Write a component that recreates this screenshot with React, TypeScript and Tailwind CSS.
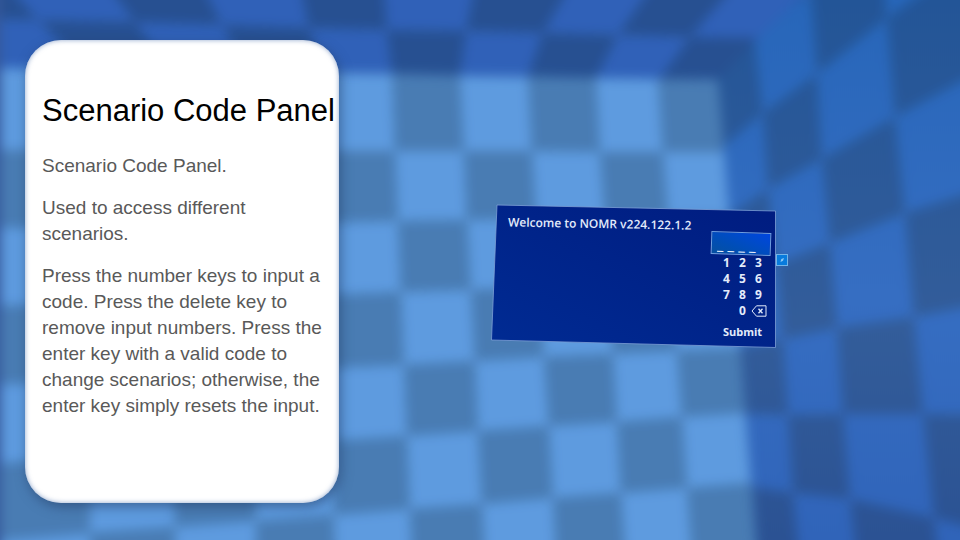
import React, { useState } from "react";

type Point = [number, number];

const backWall: { rows: number; topX: number[]; bottomX: number[]; leftY: number[]; rightY: number[] } = {
  rows: 8,
  topX: [-95, -5, 88, 170, 248, 322, 392, 460, 528, 596, 658, 718],
  bottomX: [-105, -10, 90, 175, 256, 335, 411, 484, 555, 624, 690, 755],
  leftY: [68, 150, 228, 306, 385, 463, 540, 618, 696],
  rightY: [80, 152, 216, 281, 348, 414, 485, 555, 625],
};

const ceiling: Point[][] = [
  [[-110, -40], [-15, -40], [90, -40], [190, -40], [295, -40], [382, -40], [480, -40], [585, -40], [670, -40], [757, -40], [840, -40]],
  [[-75, 18], [38, 20], [135, 22], [222, 25], [309, 28], [387, 30], [466, 31], [543, 33], [618, 35], [690, 37], [758, 38]],
  [[-5, 68], [88, 69], [170, 70], [248, 71], [322, 72], [392, 73], [460, 75], [528, 76], [596, 78], [660, 79], [718, 79]],
];

const sideWall: Point[][] = [
  [[710, 10], [716, 79], [723, 147], [729, 216], [735, 281], [740, 348], [746, 414], [752, 487], [758, 560]],
  [[750, -40], [754, 36], [763, 113], [768, 189], [777, 264], [783, 339], [788, 415], [793, 493], [801, 575]],
  [[808, -92], [811, -8], [817, 74], [822, 159], [830, 243], [837, 328], [843, 414], [850, 499], [860, 590]],
  [[872, -185], [878, -85], [887, 18], [895, 117], [905, 213], [914, 317], [923, 414], [934, 518], [945, 620]],
  [[970, -290], [975, -175], [985, -52], [990, 66], [996, 185], [1003, 300], [1010, 415], [1020, 540], [1030, 660]],
];

const toPoints = (pts: Point[]) => pts.map((p) => p.join(",")).join(" ");

function meet(topX: number, bottomX: number, leftY: number, rightY: number): Point {
  const roughY = leftY + ((rightY - leftY) * topX) / 730;
  const x = topX + ((bottomX - topX) * (roughY - 78)) / 460;
  return [Math.round(x), Math.round(leftY + ((rightY - leftY) * x) / 730)];
}

function Room() {
  const wallTiles = [];
  for (let r = 0; r < backWall.rows; r++) {
    for (let c = 0; c < backWall.topX.length - 1; c++) {
      const at = (col: number, row: number) =>
        meet(backWall.topX[col], backWall.bottomX[col], backWall.leftY[row], backWall.rightY[row]);
      wallTiles.push(
        <polygon
          key={`w${r}-${c}`}
          points={toPoints([at(c, r), at(c + 1, r), at(c + 1, r + 1), at(c, r + 1)])}
          fill={(r + c) % 2 === 1 ? "#5e9bdf" : "#497cb3"}
        />
      );
    }
  }
  return (
    <svg className="absolute inset-0 h-full w-full" viewBox="0 0 960 540" preserveAspectRatio="xMidYMid slice" aria-hidden="true">
      <defs>
        <linearGradient id="sideLight" gradientUnits="userSpaceOnUse" x1="0" y1="0" x2="0" y2="540">
          <stop offset="0" stopColor="#2766b9" />
          <stop offset="0.55" stopColor="#366ec2" />
          <stop offset="1" stopColor="#3064b9" />
        </linearGradient>
        <linearGradient id="sideDark" gradientUnits="userSpaceOnUse" x1="0" y1="0" x2="0" y2="540">
          <stop offset="0" stopColor="#235597" />
          <stop offset="0.6" stopColor="#335d9a" />
          <stop offset="1" stopColor="#2b5293" />
        </linearGradient>
        <filter id="soften" filterUnits="userSpaceOnUse" x="-60" y="-60" width="1080" height="660" colorInterpolationFilters="sRGB">
          <feGaussianBlur stdDeviation="6" />
        </filter>
      </defs>
      <rect width="960" height="540" fill="#3a70b8" />
      <g filter="url(#soften)">
        {sideWall.slice(0, 4).map((col, c) =>
          col.slice(0, -1).map((p, r) => (
            <polygon
              key={`s${r}-${c}`}
              points={toPoints([p, sideWall[c + 1][r], sideWall[c + 1][r + 1], col[r + 1]])}
              fill={(r + c) % 2 === 1 ? "url(#sideDark)" : "url(#sideLight)"}
            />
          ))
        )}
        {ceiling.slice(0, 2).map((row, r) =>
          row.slice(0, -1).map((p, c) => (
            <polygon
              key={`c${r}-${c}`}
              points={toPoints([p, row[c + 1], ceiling[r + 1][c + 1], ceiling[r + 1][c]])}
              fill={(r + c) % 2 === 0 ? "#275091" : "#3061b8"}
            />
          ))
        )}
        {wallTiles}
        <rect x="-20" y="-20" width="21" height="580" fill="#35589a" />
      </g>
    </svg>
  );
}

function InfoCard() {
  return (
    <article className="relative mt-10 ml-[25px] min-h-[463px] w-[314px] shrink-0 rounded-[36px] bg-white pt-[53px] pr-2 pb-10 pl-[17px] shadow-[2px_4px_12px_rgba(35,60,100,0.55),inset_0_0_5px_rgba(80,115,175,0.65)]">
      <h1 className="text-[31px] leading-9 whitespace-nowrap text-black">Scenario Code Panel</h1>
      <div className="mt-6 flex flex-col gap-4 text-[19px] leading-[26px] text-[#595959]">
        <p>Scenario Code Panel.</p>
        <p>Used to access different scenarios.</p>
        <p>
          Press the number keys to input a code. Press the delete key to remove input numbers. Press the enter key with a
          valid code to change scenarios; otherwise, the enter key simply resets the input.
        </p>
      </div>
    </article>
  );
}

const keys = ["1", "2", "3", "4", "5", "6", "7", "8", "9"];

function CodePanel() {
  const [code, setCode] = useState("");
  const press = (k: string) => setCode((c) => (c + k).slice(0, 4));
  const shown = code.padEnd(4, "_").split("").join(" ");
  return (
    <section
      className="relative mt-[204px] ml-[152px] h-36 w-[285px] shrink-0 text-[#e3ebfb]"
      style={{ fontFamily: '"Open Sans", "Noto Sans", sans-serif' }}
    >
      <svg className="absolute inset-0 h-full w-full" viewBox="0 0 285 144" aria-hidden="true">
        <defs>
          <linearGradient id="screen" x1="1" y1="0" x2="0" y2="1">
            <stop offset="0" stopColor="#001c80" />
            <stop offset="1" stopColor="#002b93" />
          </linearGradient>
        </defs>
        <polygon points="6,1 284.500,7 284.500,143.500 0.500,136" fill="url(#screen)" stroke="#7d9fd6" strokeWidth="0.8" />
      </svg>
      <div className="relative flex justify-between pr-[5px] pl-4">
        <h2 className="mt-3 rotate-1 text-xs leading-4 font-semibold whitespace-nowrap">Welcome to NOMR v224.122.1.2</h2>
        <div className="mt-7 flex w-[60px] shrink-0 flex-col items-center">
          <input
            aria-label="Scenario code"
            readOnly
            value={shown}
            className="h-[23px] w-[60px] rotate-2 border border-[#6f9fe0] bg-linear-to-tr from-[#0750a0] to-[#0045df] pt-px pl-[5px] text-base leading-5 font-bold outline-none"
          />
          <div className="grid grid-cols-3 pl-[3px] text-xs leading-4 font-bold">
            {keys.map((k) => (
              <button key={k} type="button" className="h-4 w-4" onClick={() => press(k)}>
                {k}
              </button>
            ))}
            <button type="button" className="col-start-2 h-4 w-4" onClick={() => press("0")}>
              0
            </button>
            <button
              type="button"
              aria-label="Delete"
              className="flex h-4 w-4 items-center justify-center"
              onClick={() => setCode((c) => c.slice(0, -1))}
            >
              <svg className="h-3 w-4" viewBox="0 0 16 12" fill="none" stroke="currentColor" aria-hidden="true">
                <path d="M1 6 L5.500 0.800 H15 V11.200 H5.500 Z" strokeWidth="1" />
                <path d="M7.500 3.800 L11.500 8.200 M11.500 3.800 L7.500 8.200" strokeWidth="1.300" />
              </svg>
            </button>
          </div>
          <button type="button" className="mt-[5px] pl-[3px] text-[11px] leading-4 font-bold" onClick={() => setCode("")}>
            Submit
          </button>
        </div>
      </div>
      <button
        type="button"
        aria-label="Pin panel"
        className="absolute top-[50px] -right-3 flex h-3 w-3 items-center justify-center border border-[#73b4e8] bg-[#087bdd]"
      >
        <svg className="h-2 w-2" viewBox="0 0 8 8" aria-hidden="true">
          <path d="M2.500 6 L3.300 3 L6 2 L5 4.800 Z" fill="#8cc8f5" />
        </svg>
      </button>
    </section>
  );
}

export default function App() {
  return (
    <main
      className="relative flex min-h-screen items-start overflow-hidden bg-[#3a70b8]"
      style={{ fontFamily: '"Liberation Sans", Arial, sans-serif' }}
    >
      <Room />
      <InfoCard />
      <CodePanel />
    </main>
  );
}
